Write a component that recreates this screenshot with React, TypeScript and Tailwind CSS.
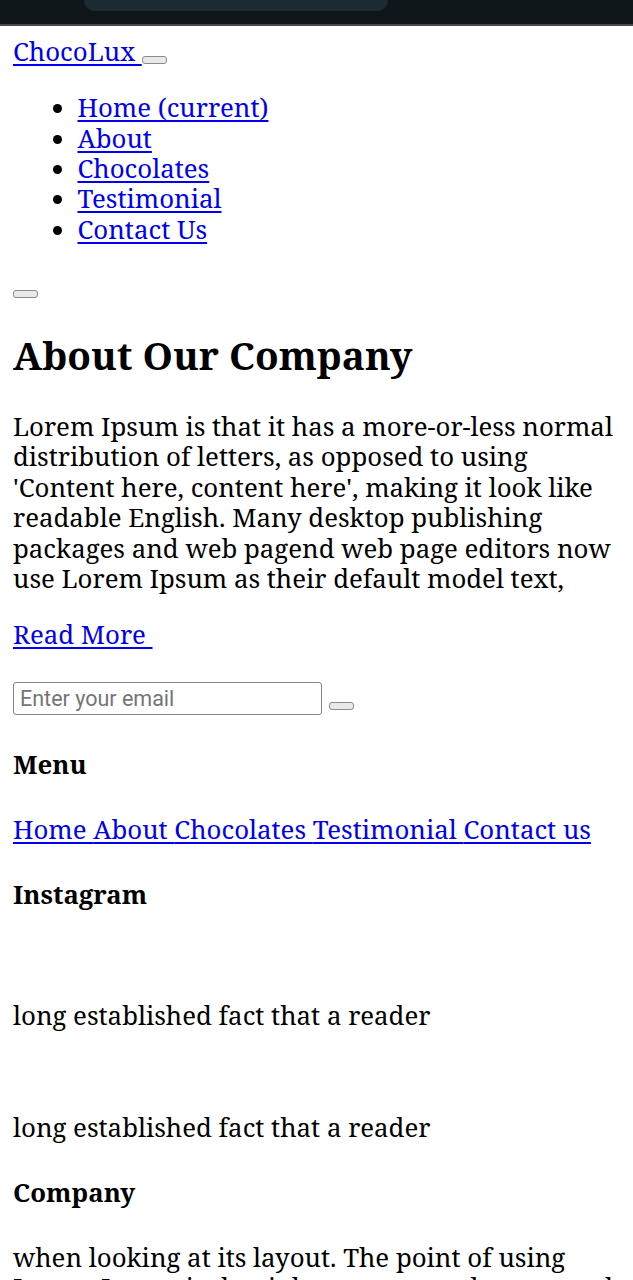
import React from "react";

function Btn({ extra }: { extra: string }) {
  return (
    <button
      type="button"
      className={
        "inline-block h-[8px] w-[25px] rounded-[3px] border border-[#8a8a8a] bg-[#e9e9e9] p-0 " + extra
      }
    />
  );
}

const linkCls = "text-[#0000ee] underline decoration-[1.5px] underline-offset-[3px]";

export default function App() {
  return (
    <div className="min-h-screen bg-white font-['Noto_Serif',serif] text-[25.8px] leading-[30.4px] text-black">
      <div className="h-[26px] border-b-2 border-[#4a4a4a] bg-[#0f1619] pl-[84px]">
        <div className="h-[11px] w-[304px] rounded-b-[20px] bg-[#1c2a31]" />
      </div>

      <div className="px-[13px] pt-[10px]">
        <nav>
          <div>
            <a href="#" className={linkCls}>
              {"ChocoLux "}
            </a>
            <Btn extra="align-[-2px]" />
          </div>
          <ul className="my-[25.8px] list-disc pl-[64.5px]">
            <li>
              <a href="#" className={linkCls}>
                Home (current)
              </a>
            </li>
            <li>
              <a href="#" className={linkCls}>
                About
              </a>
            </li>
            <li>
              <a href="#" className={linkCls}>
                Chocolates
              </a>
            </li>
            <li>
              <a href="#" className={linkCls}>
                Testimonial
              </a>
            </li>
            <li>
              <a href="#" className={linkCls}>
                Contact Us
              </a>
            </li>
          </ul>
          <div>
            <Btn extra="align-[-2px]" />
          </div>
        </nav>

        <h2 className="mt-[33px] text-[38.7px] leading-[45.6px] font-bold">About Our Company</h2>
        <p className="mt-[32px]">
          Lorem Ipsum is that it has a more-or-less normal distribution of letters, as opposed to using
          'Content here, content here', making it look like readable English. Many desktop publishing
          packages and web pagend web page editors now use Lorem Ipsum as their default model text,
        </p>
        <p className="mt-[25.8px]">
          <a href="#" className={linkCls}>
            {"Read More\u00a0"}
          </a>
        </p>

        <form className="mt-[25.8px] flex h-[40px] items-start" onSubmit={(e) => e.preventDefault()}>
          <input
            type="email"
            placeholder="Enter your email"
            className="mt-[7px] h-[33px] w-[309px] rounded-[3px] border border-[#858585] px-[6px] font-['Roboto',sans-serif] text-[21.5px] text-black placeholder:text-[#757575]"
          />
          <Btn extra="ml-[7px] mt-[27px]" />
        </form>

        <h4 className="mt-[34px] font-bold">Menu</h4>
        <p className="mt-[34.3px]">
          <a href="#" className={linkCls}>
            {"Home "}
          </a>
          <a href="#" className={linkCls}>
            {"About "}
          </a>
          <a href="#" className={linkCls}>
            {"Chocolates "}
          </a>
          <a href="#" className={linkCls}>
            {"Testimonial "}
          </a>
          <a href="#" className={linkCls}>
            Contact us
          </a>
        </p>

        <h4 className="mt-[34.3px] font-bold">Instagram</h4>
        <div className="mt-[34.3px] h-[30.4px]" />
        <p className="mt-[25.8px]">long established fact that a reader</p>
        <div className="mt-[25.8px] h-[30.4px]" />
        <p className="mt-[25.8px]">long established fact that a reader</p>

        <h4 className="mt-[34.3px] font-bold">Company</h4>
        <p className="mt-[34.3px]">
          when looking at its layout. The point of using Lorem Ipsum is that it has a more-or-less normal
          distribution of letters, as opposed to using 'Content here, content here', making it look like
          readable English.
        </p>
      </div>
    </div>
  );
}
